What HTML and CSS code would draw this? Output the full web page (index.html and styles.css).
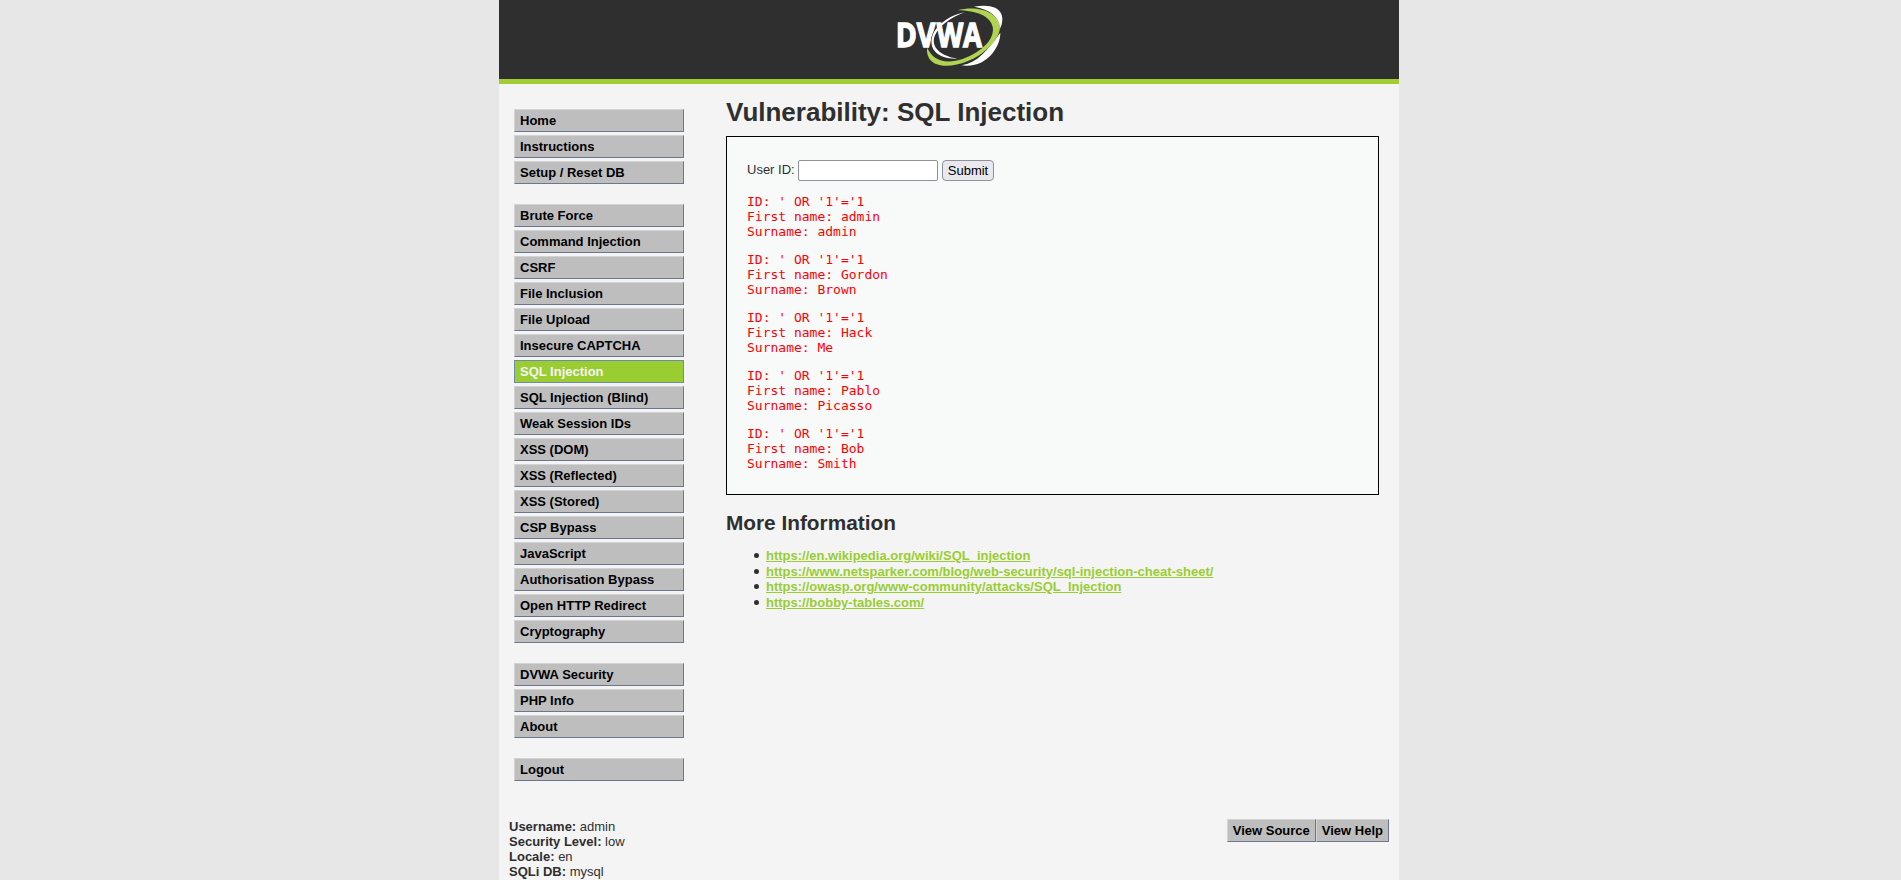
FILE: index.html
```html
<!DOCTYPE html>
<html lang="en">
<head>
<meta charset="utf-8">
<title>Vulnerability: SQL Injection</title>
<link rel="stylesheet" href="styles.css">
</head>
<body>
<div class="container">
  <header class="header">
    <svg class="logo" width="140" height="79" viewBox="0 0 420 237" role="img" aria-label="DVWA">
      <path fill="#fff" d="M282 20C322 12 356 20 364 42C370 58 366 74 360 86C356 50 332 28 282 20Z"/>
      <path fill="#fff" d="M361 98C362 134 326 206 244 196C292 188 322 152 361 98Z"/>
      <path fill="#b0d352" d="M232 31C292 16 352 34 360 78C362 118 310 166 262 184C212 205 158 202 145 170C141 161 140 152 142 143C156 176 190 196 248 177C308 154 345 116 338 80C330 48 290 32 232 31Z"/>
      <text class="logo-text" x="47" y="142" textLength="119" lengthAdjust="spacingAndGlyphs">DV</text>
      <path fill="#fff" stroke="#2f2f2f" stroke-width="4" paint-order="stroke" d="M254 37C208 54 176 80 164 108C152 142 182 168 232 176C176 178 147 150 156 112C165 78 206 46 254 37Z"/>
      <text class="logo-text" x="170" y="142" textLength="136" lengthAdjust="spacingAndGlyphs">WA</text>
    </svg>
  </header>
  <div class="columns">
    <nav class="menu">
      <ul class="menu-group"><li class="button">Home</li><li class="button">Instructions</li><li class="button">Setup / Reset DB</li></ul>
      <ul class="menu-group">
        <li class="button">Brute Force</li><li class="button">Command Injection</li><li class="button">CSRF</li>
        <li class="button">File Inclusion</li><li class="button">File Upload</li><li class="button">Insecure CAPTCHA</li>
        <li class="button selected">SQL Injection</li><li class="button">SQL Injection (Blind)</li><li class="button">Weak Session IDs</li>
        <li class="button">XSS (DOM)</li><li class="button">XSS (Reflected)</li><li class="button">XSS (Stored)</li>
        <li class="button">CSP Bypass</li><li class="button">JavaScript</li><li class="button">Authorisation Bypass</li>
        <li class="button">Open HTTP Redirect</li><li class="button">Cryptography</li>
      </ul>
      <ul class="menu-group"><li class="button">DVWA Security</li><li class="button">PHP Info</li><li class="button">About</li></ul>
      <ul class="menu-group"><li class="button">Logout</li></ul>
    </nav>
    <main class="content">
      <h1 class="title">Vulnerability: SQL Injection</h1>
      <section class="panel">
        <form class="query"><label class="query-label" for="uid">User ID:</label><input class="query-input" id="uid" type="text"><button class="query-submit" type="button">Submit</button></form>
        <pre class="result">ID: ' OR '1'='1
First name: admin
Surname: admin</pre>
        <pre class="result">ID: ' OR '1'='1
First name: Gordon
Surname: Brown</pre>
        <pre class="result">ID: ' OR '1'='1
First name: Hack
Surname: Me</pre>
        <pre class="result">ID: ' OR '1'='1
First name: Pablo
Surname: Picasso</pre>
        <pre class="result">ID: ' OR '1'='1
First name: Bob
Surname: Smith</pre>
      </section>
      <h2 class="subtitle">More Information</h2>
      <ul class="links">
        <li class="links-item"><a class="link" href="#">https://en.wikipedia.org/wiki/SQL_injection</a></li>
        <li class="links-item"><a class="link" href="#">https://www.netsparker.com/blog/web-security/sql-injection-cheat-sheet/</a></li>
        <li class="links-item"><a class="link" href="#">https://owasp.org/www-community/attacks/SQL_Injection</a></li>
        <li class="links-item"><a class="link" href="#">https://bobby-tables.com/</a></li>
      </ul>
    </main>
  </div>
  <footer class="status">
    <div class="status-info">
      <div><b>Username:</b> admin</div>
      <div><b>Security Level:</b> low</div>
      <div><b>Locale:</b> en</div>
      <div><b>SQLi DB:</b> mysql</div>
    </div>
    <div class="status-actions"><div class="button">View Source</div><div class="button">View Help</div></div>
  </footer>
</div>
</body>
</html>
```
FILE: styles.css
```css
* { box-sizing: border-box; }
body {
  margin: 0;
  padding-right: 3px;
  height: 880px;
  overflow: hidden;
  background: #e7e7e7;
  color: #2f2f2f;
  font: 13px/15px "Liberation Sans", Arial, sans-serif;
}
.container { width: 900px; height: 880px; margin: 0 auto; background: #f4f4f4; overflow: hidden; }
.header { height: 84px; background: #2f2f2f; border-bottom: 5px solid #a1cc33; display: flex; justify-content: center; }
.logo { display: block; margin-left: 2px; }
.logo-text { font-family: "Open Sans", sans-serif; font-weight: 700; font-size: 100px; fill: #fff; stroke: #fff; stroke-width: 4px; }
.columns { display: flex; height: 735px; }
.menu { width: 227px; padding: 25px 0 0 15px; }
.menu-group { list-style: none; margin: 0 0 20px; padding: 0; width: 170px; display: grid; gap: 3px; }
.button {
  height: 23px;
  padding: 3px 5px;
  border: 1px solid;
  border-color: #d3d3d3 #6b7790 #6b7790 #d3d3d3;
  background: #bebebe;
  color: #000;
  font-weight: bold;
  white-space: nowrap;
}
.button.selected { background: #9acd32; border-color: #708aac; color: #f4f4f4; }
.content { width: 653px; padding-top: 13px; }
.title { margin: 0; height: 39px; font-size: 26px; line-height: 30px; }
.panel { height: 359px; padding: 23px 20px 0; border: 1px solid #000; background: #f8fafa; }
.query { display: flex; height: 21px; margin-bottom: 13px; }
.query-label { width: 51px; line-height: 19px; }
.query-input { width: 140px; margin: 0 4px 0 0; padding: 1px 2px; border: 1px solid #8f8f9d; border-radius: 2px; background: #fff; }
.query-submit { width: 52px; padding: 0; border: 1px solid #8f8f9d; border-radius: 4px; background: #e9e9ed; color: #000; font: 13px "Liberation Sans", Arial, sans-serif; }
.result { margin: 0 0 13px; color: #f00; font: 13px/15px "DejaVu Sans Mono", monospace; }
.subtitle { margin: 16px 0 0; font-size: 20.8px; line-height: 24px; }
.links { list-style: none; margin: 13px 0 0; padding-left: 40px; line-height: 15.6px; }
.links-item::before {
  content: "";
  display: inline-block;
  width: 5px;
  height: 5px;
  margin: 0 8px 2px -13px;
  transform: translateX(1px);
  border-radius: 50%;
  background: #2f2f2f;
}
.link { color: #9acd32; font-weight: bold; }
.status { display: flex; justify-content: space-between; padding: 0 10px; }
.status-actions { display: flex; height: 23px; }
```
